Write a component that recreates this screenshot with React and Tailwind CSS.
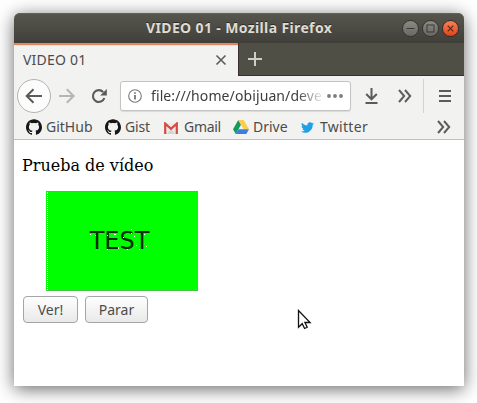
import React from "react";
import { SiGithub } from "react-icons/si";
import { FaTwitter } from "react-icons/fa";

const Label = ({ className = "", children }) => (
  <span className={"block shrink-0 whitespace-nowrap " + className}>{children}</span>
);

function WindowButton({ close, children }) {
  return (
    <span
      className={
        "flex size-[17px] items-center justify-center rounded-full border " +
        (close
          ? "border-[#3b2b24] bg-linear-to-b from-[#f58059] to-[#dc4416]"
          : "border-[#35342f] bg-linear-to-b from-[#8c8a84] to-[#696862]")
      }
    >
      <svg width="15" height="15" viewBox="0 0 15 15" fill="none" stroke={close ? "#5d2412" : "#3b3a36"} strokeWidth="1">
        {children}
      </svg>
    </span>
  );
}

function TitleBar() {
  return (
    <div className="flex h-[30px] items-center rounded-t-[6px] bg-linear-to-b from-[#57564e] to-[#403f3a] pr-[5px] shadow-[inset_0_1px_0_#62615a]">
      <Label className="ml-[132px] w-[190px] text-[14px] leading-[30px] font-bold tracking-[0.37px] text-[#dfdbd2] [text-shadow:0_-1px_0_#2d2c28]">
        VIDEO 01 - Mozilla Firefox
      </Label>
      <div className="ml-auto flex gap-[3px]">
        <WindowButton><path d="M3.5 7.5h8" /></WindowButton>
        <WindowButton><rect x="4" y="4" width="7" height="7" /></WindowButton>
        <WindowButton close><path d="M4.7 4.7l5.6 5.6M10.3 4.7l-5.6 5.6" strokeWidth="1.2" /></WindowButton>
      </div>
    </div>
  );
}

function TabBar() {
  return (
    <div className="flex h-[33px] bg-[#504f46]">
      <div className="flex w-[224px] items-center border-t-2 border-[#e2875f] bg-[#f2f2f0] pl-[9px] shadow-[inset_0_1px_0_#fbdcc3]">
        <Label className="pb-[2px] text-[14px] tracking-[0.2px] text-[#4c4c4c]">VIDEO 01</Label>
        <svg className="mr-[11px] mb-[2px] ml-auto" width="12" height="12" viewBox="0 0 12 12" stroke="#5c5c5b" strokeWidth="1.6">
          <path d="M1.5 1.5l9 9M10.5 1.5l-9 9" />
        </svg>
      </div>
      <div className="flex flex-1 items-center border-b border-l border-[#3a302e] pl-[9px]">
        <svg width="14" height="14" viewBox="0 0 14 14" stroke="#cecdc6" strokeWidth="2">
          <path d="M7 0v14M0 7h14" />
        </svg>
      </div>
    </div>
  );
}

const Chevrons = () => (
  <svg width="14" height="14" viewBox="0 0 14 14" fill="none" stroke="#5d5d5c" strokeWidth="2">
    <path d="M1 1l5.2 6L1 13M7 1l5.2 6L7 13" />
  </svg>
);

function NavBar() {
  return (
    <div className="flex h-[40px] items-center pl-[3px]">
      <span className="flex size-[34px] items-center justify-center rounded-full border border-[#b3b3b0] bg-[#fcfcfc]">
        <svg width="18" height="16" viewBox="0 0 18 16" fill="none" stroke="#5b5b5a" strokeWidth="2">
          <path d="M17 8H2M8.5 1.2L1.7 8l6.8 6.8" />
        </svg>
      </span>
      <svg className="ml-[8px]" width="16" height="16" viewBox="0 0 16 16" fill="none" stroke="#b5b5b3" strokeWidth="2">
        <path d="M0 8h14M7.8 1.2L14.6 8l-6.8 6.8" />
      </svg>
      <svg className="ml-[16px]" width="17" height="16" viewBox="0 0 17 16" fill="none" stroke="#5b5b5a" strokeWidth="2.1">
        <path d="M12.2 4.1A5.9 5.9 0 1 0 13.4 10" />
        <path d="M15.8 1v6.6H9.2z" fill="#5b5b5a" stroke="none" />
      </svg>
      <div className="ml-[12px] flex h-[30px] w-[231px] items-center rounded-[3px] border border-[#c4c4c2] bg-white pl-[7px] shadow-[0_1px_1px_#d9d9d7]">
        <svg width="14" height="14" viewBox="0 0 14 14" fill="none" stroke="#777" strokeWidth="1.1">
          <circle cx="7" cy="7" r="6.3" />
          <path d="M7 6v4.6M7 3.2v1.6" strokeWidth="1.8" />
        </svg>
        <Label className="ml-[9px] w-[172px] mask-[linear-gradient(to_right,black_146px,transparent_174px)] text-[14px] leading-[24px] tracking-[0.1px] text-[#3c3c3c]">
          file:///home/obijuan/deve
        </Label>
        <svg className="ml-[4px]" width="16" height="4" viewBox="0 0 16 4" fill="#7c7c7b">
          <circle cx="2" cy="2" r="1.9" /><circle cx="8" cy="2" r="1.9" /><circle cx="14" cy="2" r="1.9" />
        </svg>
      </div>
      <svg className="ml-[14px]" width="13" height="16" viewBox="0 0 13 16" fill="none" stroke="#5b5b5a" strokeWidth="2">
        <path d="M6.5 0v11M1.2 6l5.3 5.3L11.8 6M.5 15h12" />
      </svg>
      <span className="ml-[20px]"><Chevrons /></span>
      <span className="ml-[11px] h-[34px] w-px bg-[#d3d3d1]" />
      <svg className="ml-[15px]" width="12" height="12" viewBox="0 0 12 12" stroke="#5b5b5a" strokeWidth="2">
        <path d="M0 1h12M0 6h12M0 11h12" />
      </svg>
    </div>
  );
}

function Bookmarks() {
  return (
    <div className="flex h-[24px] items-center border-b border-[#bfbfbd] pb-px pl-[12px] text-[14px] leading-[20px] text-[#4c4c4c]">
      <SiGithub size={16} color="#161616" />
      <Label className="ml-[4px] w-[59px]">GitHub</Label>
      <SiGithub size={16} color="#161616" />
      <Label className="ml-[4px] w-[39px] tracking-[-0.2px]">Gist</Label>
      <svg className="mt-px" width="14" height="12" viewBox="0 0 14 12">
        <path d="M1 1h12v11H1z" fill="#eceae8" />
        <path d="M2.5 12L7 7l4.5 5z" fill="#d7d5d3" />
        <path d="M1.2 12V1.6L7 6.8l5.8-5.2V12" fill="none" stroke="#d54b3f" strokeWidth="2.2" />
      </svg>
      <Label className="ml-[6px] w-[49px] tracking-[-0.3px]">Gmail</Label>
      <svg width="16" height="14" viewBox="0 0 16 14">
        <path d="M5.3 0L0 9.3 2.7 14 8 4.7z" fill="#159b59" />
        <path d="M5.3 0h5.4L16 9.3h-5.4z" fill="#fdcb4e" />
        <path d="M5.4 9.3H16L13.3 14H2.7z" fill="#3c7de2" />
      </svg>
      <Label className="ml-[4px] w-[48px]">Drive</Label>
      <FaTwitter size={13} color="#1da1e8" />
      <Label className="ml-[6px] tracking-[0.3px]">Twitter</Label>
      <span className="mr-[13px] ml-auto"><Chevrons /></span>
    </div>
  );
}

const PageButton = ({ className, children }) => (
  <button
    className={
      "h-[27px] shrink-0 rounded-[4px] border border-[#a5a5a5] bg-linear-to-b from-[#fefefe] to-[#e9e9e9] text-[14px] leading-[25px] text-[#4c4c4c] " +
      className
    }
  >
    {children}
  </button>
);

function Page() {
  return (
    <div className="h-[246px] bg-white pl-[8px]">
      <p className="pt-[16px] font-['DejaVu_Serif',serif] text-[16px] leading-[19px] text-black">Prueba de vídeo</p>
      <div className="mt-[16px] ml-[24px] flex h-[100px] w-[152px] border-y border-[#45c645] bg-[#00ff00]">
        <div className="ml-px flex flex-1 items-center justify-center border-l border-dotted border-white pr-[7px] font-['DejaVu_Sans',sans-serif] text-[24px] leading-none text-[#002b00]">
          <span className="relative">
            TEST
            {/* Compression specks around the caption */}
            <svg className="absolute inset-0" width="60" height="24" viewBox="0 0 60 24" fill="#fff" shapeRendering="crispEdges">
              <path d="M0 5h1v1H0zM5 6h1v1H5zM17 6h1v1h-1zM24 5h2v1h-2zM33 8h1v1h-1zM41 0h1v1h-1zM41 4h1v1h-1zM44 7h1v1h-1zM54 5h1v1h-1zM17 20h1v1h-1zM28 18h1v2h-1zM37 20h1v1h-1zM46 16h1v1h-1zM49 20h1v1h-1zM56 17h1v1h-1z" />
            </svg>
          </span>
        </div>
      </div>
      <div className="mt-[5px] flex gap-[7px] pl-px">
        <PageButton className="w-[55px]">Ver!</PageButton>
        <PageButton className="w-[63px]">Parar</PageButton>
      </div>
    </div>
  );
}

export default function App() {
  return (
    <div className="relative h-[403px] w-[477px] overflow-hidden bg-white px-[14px] pt-[13px] font-['Noto_Sans',sans-serif]">
      <div className="w-[450px] rounded-t-[6px] bg-[#f2f2f0] shadow-[0_3px_18px_rgba(0,0,0,0.6)]">
        <TitleBar />
        <TabBar />
        <NavBar />
        <Bookmarks />
        <Page />
      </div>
      <svg className="absolute top-[309px] left-[297px]" width="15" height="22" viewBox="0 0 15 22">
        <path d="M1.5 1.5v16.8l3.7-3.6 2.4 4.8 2.6-1.2-2.3-4.8h5.2z" fill="#fff" stroke="#111" strokeWidth="1.3" />
      </svg>
    </div>
  );
}
